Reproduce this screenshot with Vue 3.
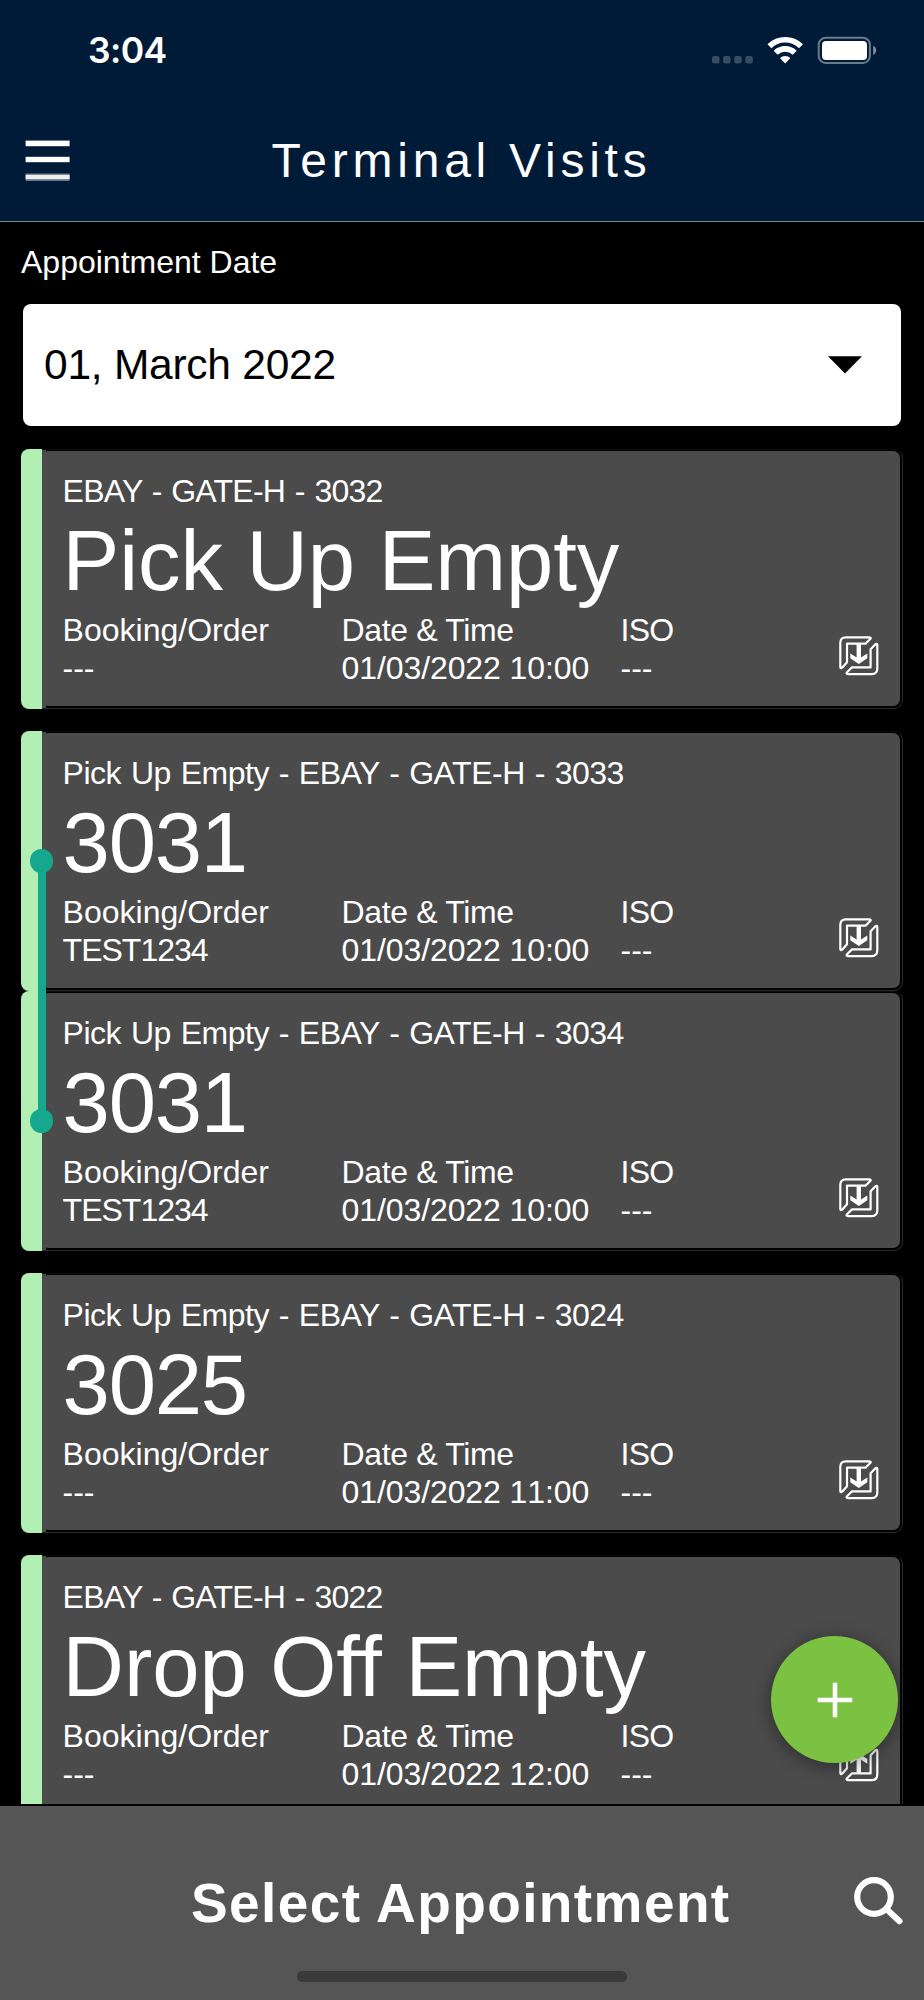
<script setup>
const groups = [
  [{ head: 'EBAY - GATE-H - 3032', title: 'Pick Up Empty', order: '---', time: '01/03/2022 10:00', iso: '---', dir: 'down' }],
  [
    { head: 'Pick Up Empty - EBAY - GATE-H - 3033', title: '3031', order: 'TEST1234', time: '01/03/2022 10:00', iso: '---', dir: 'down' },
    { head: 'Pick Up Empty - EBAY - GATE-H - 3034', title: '3031', order: 'TEST1234', time: '01/03/2022 10:00', iso: '---', dir: 'down' }
  ],
  [{ head: 'Pick Up Empty - EBAY - GATE-H - 3024', title: '3025', order: '---', time: '01/03/2022 11:00', iso: '---', dir: 'down' }],
  [{ head: 'EBAY - GATE-H - 3022', title: 'Drop Off Empty', order: '---', time: '01/03/2022 12:00', iso: '---', dir: 'up' }]
]
const isNumber = (title) => /^\d+$/.test(title)
</script>

<template>
  <div class="phone">
    <header class="header">
      <div class="status">
        <span class="clock">3:04</span>
        <svg class="status-icons" width="172" height="40" viewBox="0 0 172 40">
          <g fill="#fff" fill-opacity=".22">
            <rect x="6" y="26" width="7.5" height="7.4" rx="2.2" />
            <rect x="17.1" y="26" width="7.5" height="7.4" rx="2.2" />
            <rect x="28.2" y="26" width="7.5" height="7.4" rx="2.2" />
            <rect x="39.3" y="26" width="7.5" height="7.4" rx="2.2" />
          </g>
          <g fill="none" stroke="#fff" stroke-width="5.6">
            <path d="M63.4 16.2a22.6 22.6 0 0 1 31.6 0" />
            <path d="M69.7 22.7a13.6 13.6 0 0 1 19 0" />
          </g>
          <path d="M79.2 33.4l-5.2-5.4a7.6 7.6 0 0 1 10.4 0z" fill="#fff" />
          <rect x="112.7" y="7.7" width="51.2" height="25.2" rx="7" fill="none" stroke="#fff" stroke-opacity=".42" stroke-width="2" />
          <rect x="116" y="11" width="45" height="19" rx="4" fill="#fff" />
          <path d="M167.2 15.8c4 1.8 4 7.4 0 9.2z" fill="#fff" fill-opacity=".5" />
        </svg>
      </div>
      <div class="nav">
        <svg class="menu" width="46" height="44" viewBox="0 0 46 44">
          <g fill="#fff">
            <rect x=".6" y="1.6" width="44" height="5.6" />
            <rect x=".6" y="17.8" width="44" height="5.4" />
            <rect x=".6" y="34.6" width="44" height="7.2" fill-opacity=".5" />
            <rect x=".6" y="36" width="44" height="4" fill-opacity=".85" />
          </g>
        </svg>
        <h1 class="nav-title">Terminal Visits</h1>
      </div>
    </header>

    <main class="content">
      <div class="label">Appointment Date</div>
      <div class="select">
        <span>01, March 2022</span>
        <svg width="34" height="18" viewBox="0 0 34 18"><path d="M0 .3h34L17 17.6z" /></svg>
      </div>
      <div class="groups">
        <section v-for="(group, i) in groups" :key="i" class="group">
          <article v-for="card in group" :key="card.head" class="card">
            <div class="stripe"></div>
            <div class="frame">
              <div class="panel">
                <div class="head" :class="{ short: !isNumber(card.title) }">{{ card.head }}</div>
                <div class="title" :class="{ number: isNumber(card.title) }">{{ card.title }}</div>
                <div class="meta">
                  <dl>
                    <dt class="order">Booking/Order</dt>
                    <dd :class="{ ref: card.order !== '---' }">{{ card.order }}</dd>
                  </dl>
                  <dl>
                    <dt>Date &amp; Time</dt>
                    <dd>{{ card.time }}</dd>
                  </dl>
                  <dl>
                    <dt class="iso">ISO</dt>
                    <dd>{{ card.iso }}</dd>
                  </dl>
                  <svg class="box" width="40" height="40" viewBox="0 0 40 40">
                    <g fill="none" stroke="#fff" stroke-width="2.2" stroke-linejoin="round">
                      <path d="M1.3 31V6.8Q1.3 1.3 6.8 1.3H30.5Q32.6 1.5 31.2 3L26.5 7.7H8V26.2L3.4 31.4Q1.4 33 1.3 31z" />
                      <path d="M38.3 9V32.6Q38.3 38.1 32.8 38.1H9Q6.6 37.8 8 36.2L13 31.4H31.6V13.3L36.2 8.4Q38.2 6.8 38.3 9z" />
                    </g>
                    <path
                      d="M17.6 7.8h4.4v13.6l6.3-4v4.8l-8.5 5.8-8.5-5.8v-4.8l6.3 4z"
                      fill="#fff"
                      :transform="card.dir === 'up' ? 'matrix(1 0 0 -1 0 39.2)' : null"
                    />
                  </svg>
                </div>
              </div>
            </div>
          </article>
          <div v-if="group.length > 1" class="link"></div>
        </section>
      </div>
    </main>

    <button class="fab" aria-label="Add">
      <svg width="36" height="36" viewBox="0 0 36 36"><path d="M18 .7v34.6M.7 18h34.6" stroke="#fff" stroke-width="4.5" /></svg>
    </button>

    <footer class="footer">
      <span class="footer-title">Select Appointment</span>
      <svg class="search" width="52" height="52" viewBox="0 0 52 52" fill="none" stroke="#fff">
        <circle cx="21" cy="21" r="16.8" stroke-width="6.2" />
        <path d="M34 33.5L46.5 45.3" stroke-width="6" stroke-linecap="round" />
      </svg>
      <div class="home"></div>
    </footer>
  </div>
</template>

<style>
body { margin: 0; background: #000; }
</style>

<style scoped>
.phone {
  position: relative;
  width: 924px;
  height: 2000px;
  display: flex;
  flex-direction: column;
  overflow: hidden;
  background: #000;
  color: #fff;
  font-family: "Liberation Sans", Arial, sans-serif;
}
.header {
  box-sizing: border-box;
  height: 222px;
  background: #001b37;
  border-bottom: 1px solid #7b8694;
}
.status {
  height: 101px;
  display: flex;
  justify-content: space-between;
  align-items: center;
  padding: 0 46px 0 88px;
}
.clock {
  margin-top: 1px;
  font: 600 35.5px/40px Inter, sans-serif;
  letter-spacing: -0.6px;
}
.status-icons { margin-top: -1px; }
.nav {
  height: 120px;
  display: grid;
  grid-template-columns: 1fr auto 1fr;
  align-items: center;
  padding: 0 26px 0 25px;
}
.nav-title {
  margin: 0;
  font-size: 48px;
  font-weight: 400;
  line-height: 60px;
  letter-spacing: 4.75px;
}
.content {
  height: 1582px;
  overflow: hidden;
  box-sizing: border-box;
  padding: 21px 21px 0;
}
.label {
  font-size: 32px;
  line-height: 38px;
}
.select {
  margin: 23px 2px;
  height: 122px;
  box-sizing: border-box;
  display: flex;
  justify-content: space-between;
  align-items: center;
  padding: 0 39px 1px 21px;
  border-radius: 8px;
  background: #fff;
  color: #000;
  font-size: 42.5px;
  letter-spacing: -0.25px;
}
.groups {
  display: flex;
  flex-direction: column;
  gap: 22px;
}
.group { position: relative; }
.card {
  height: 260px;
  display: grid;
  grid-template-columns: 21px 1fr;
}
.stripe {
  border-radius: 8px 0 0 8px;
  background: #b2efb2;
}
.frame {
  box-sizing: border-box;
  padding: 1px 2px 2px 0;
  border: 1px solid #2a2a2a;
  border-width: 1px 1px 1px 0;
  border-top-color: #0c0c0c;
  border-radius: 0 9px 9px 0;
  background: linear-gradient(90deg, #4b4b4b 4px, #000 4px);
  background-origin: border-box;
}
.panel {
  height: 100%;
  box-sizing: border-box;
  padding: 21px 21px 0 20.6px;
  border-radius: 6px 7px 7px 6px;
  background: #4b4b4b;
  font-size: 32px;
  line-height: 38px;
  white-space: nowrap;
}
.head {
  letter-spacing: -0.5px;
  word-spacing: 1.5px;
}
.head.short { letter-spacing: -0.75px; }
.title {
  font-size: 85px;
  line-height: 101px;
  letter-spacing: -0.05px;
}
.title.number { letter-spacing: -1.2px; }
.meta {
  display: grid;
  grid-template-columns: 279px 279px 1fr 40px;
}
dl, dd { margin: 0; }
dt { letter-spacing: -0.35px; }
dt.order { letter-spacing: 0; }
dt.iso { letter-spacing: -0.8px; }
dd {
  letter-spacing: -0.1px;
  font-kerning: none;
}
dd.ref { letter-spacing: -1px; }
.box { margin-top: 24.5px; }
.link {
  position: absolute;
  left: 17px;
  top: 130px;
  width: 8px;
  height: 260px;
  background: #15a88e;
}
.link::before,
.link::after {
  content: "";
  position: absolute;
  left: -8px;
  width: 23.4px;
  height: 23.4px;
  border-radius: 50%;
  background: #15a88e;
}
.link::before { top: -11.7px; }
.link::after { bottom: -11.7px; }
.fab {
  position: absolute;
  left: 771px;
  top: 1636px;
  width: 127px;
  height: 127px;
  display: flex;
  align-items: center;
  justify-content: center;
  padding: 0;
  border: 0;
  border-radius: 50%;
  background: #7bc142;
  box-shadow: 0 3px 18px rgba(0, 0, 0, 0.42);
}
.footer {
  position: relative;
  height: 194px;
  box-sizing: border-box;
  margin-top: 2px;
  padding: 0 19px 0 191px;
  display: flex;
  justify-content: space-between;
  align-items: center;
  background: #555;
}
.footer-title {
  font-size: 55px;
  font-weight: 700;
  letter-spacing: 1.4px;
}
.search { margin-top: -3px; }
.home {
  position: absolute;
  left: 297px;
  bottom: 18px;
  width: 330px;
  height: 11px;
  border-radius: 6px;
  background: #3a3a3a;
}
</style>
